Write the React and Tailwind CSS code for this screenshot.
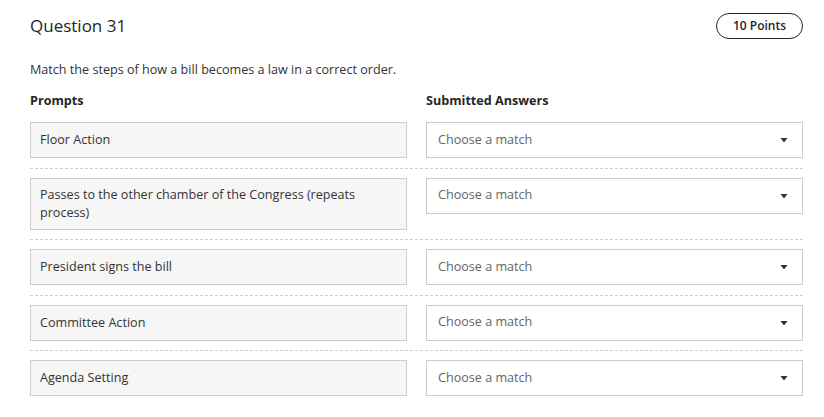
import React from 'react';

const prompts = [
    'Floor Action',
    'Passes to the other chamber of the Congress (repeats process)',
    'President signs the bill',
    'Committee Action',
    'Agenda Setting'
];

const Caret = () => (
    <svg width="8" height="6" viewBox="0 0 8 6" className="shrink-0">
        <path d="M0.5 1 H7.5 L4 5.5 Z" fill="#333333" />
    </svg>
);

const App = () => {
    return (
        <div className="w-[824px] h-[417px] bg-white text-[#333333] overflow-hidden" style={{ fontFamily: '"Open Sans", sans-serif' }}>
            <div className="ml-[30px] w-[773px]">
                <div className="flex items-center justify-between pt-[13px] h-[38px]">
                    <h1 className="text-[17px] leading-[24px] text-[#262626] font-normal">Question 31</h1>
                    <span className="h-[26px] w-[87px] rounded-full border-[1.5px] border-[#262626] flex items-center justify-center text-[12px] font-semibold text-[#262626]">
                        10 Points
                    </span>
                </div>
                <p className="mt-[23px] text-[12.6px] leading-[18px]">
                    Match the steps of how a bill becomes a law in a correct order.
                </p>
                <div className="mt-[13px] grid grid-cols-2 gap-[19px] text-[12.6px] leading-[18px] font-bold text-[#262626]">
                    <div>Prompts</div>
                    <div>Submitted Answers</div>
                </div>
                <div className="mt-[12px]">
                    {prompts.map((p, i) => (
                        <div
                            key={i}
                            className={`grid grid-cols-2 gap-[19px] items-start ${i === 0 ? '' : 'pt-[9px]'} ${i === prompts.length - 1 ? '' : 'pb-[9.5px] border-b border-dashed border-[#cfcfcf]'}`}
                        >
                            <div className="min-h-[36px] bg-[#f6f6f6] border border-[#cccccc] px-[9px] py-[7px] flex items-center text-[12.6px] leading-[18px] text-[#333333]">
                                {p}
                            </div>
                            <div className="h-[36px] bg-white border border-[#cccccc] pl-[11px] pr-[14px] flex items-center justify-between">
                                <span className="text-[12.6px] text-[#666666]">Choose a match</span>
                                <Caret />
                            </div>
                        </div>
                    ))}
                </div>
            </div>
        </div>
    );
};

export default App;
